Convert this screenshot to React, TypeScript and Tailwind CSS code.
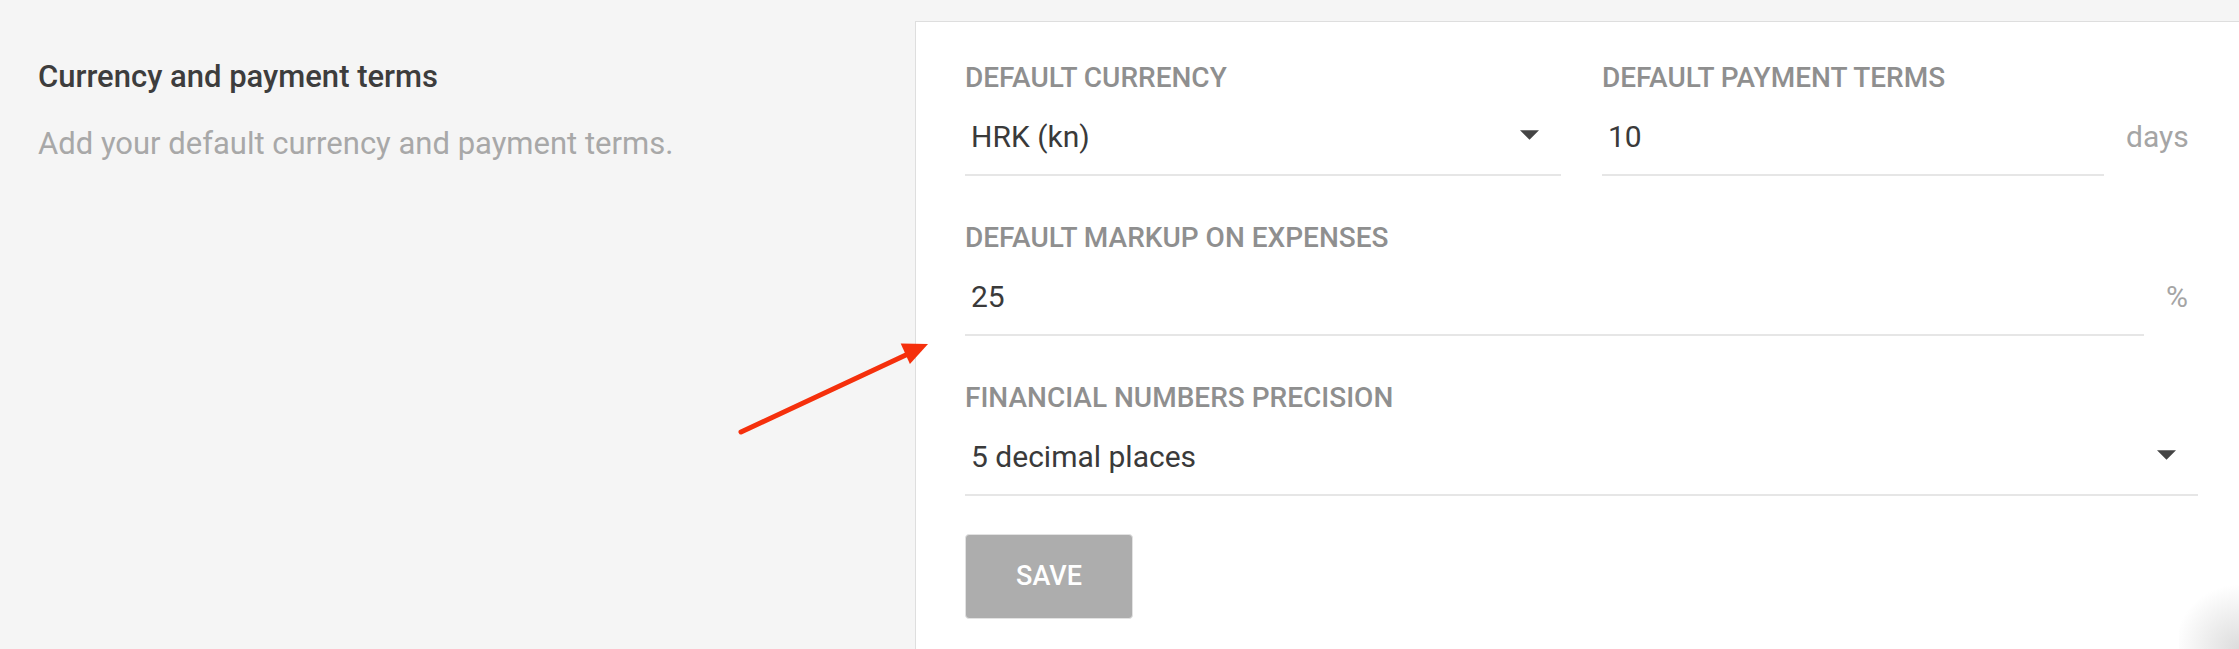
import React from "react";

function Caret({ w = 19 }: { w?: number }) {
  return (
    <svg width={w} height={10} viewBox="0 0 20 10" className="shrink-0 mt-[8px]">
      <polygon points="0,0 20,0 10,10" fill="#444444" />
    </svg>
  );
}

function Label({ children }: { children: React.ReactNode }) {
  return (
    <div className="text-[28px] leading-[28px] font-medium text-[#8f8f8f] whitespace-nowrap">
      {children}
    </div>
  );
}

function Input({
  value,
  caret,
  className = "",
}: {
  value: string;
  caret?: boolean;
  className?: string;
}) {
  return (
    <div
      className={
        "flex items-start border-b-2 border-[#e6e6e6] pb-[22px] pl-[6px] pr-[22px] " +
        className
      }
    >
      <span className="flex-1 text-[30px] leading-[30px] text-[#3a3a3a] whitespace-nowrap">
        {value}
      </span>
      {caret && <Caret />}
    </div>
  );
}

export default function App() {
  return (
    <div
      className="relative flex h-[649px] w-full overflow-hidden bg-[#f5f5f5]"
      style={{ fontFamily: "Roboto, 'Liberation Sans', sans-serif" }}
    >
      <div className="w-[915px] shrink-0 pl-[38px] pt-[61px]">
        <h2 className="text-[31px] leading-[31px] font-medium text-[#3d3d3d] whitespace-nowrap">
          Currency and payment terms
        </h2>
        <p className="mt-[36px] text-[31px] leading-[31px] text-[#a8a8a8] whitespace-nowrap">
          Add your default currency and payment terms.
        </p>
      </div>

      <div className="mt-[21px] flex-1 border-l border-t border-[#dedede] bg-white pl-[49px] pr-[41px] pt-[42px]">
        <div className="grid grid-cols-2 gap-x-[41px]">
          <div>
            <Label>DEFAULT CURRENCY</Label>
            <div className="mt-[30px]">
              <Input value="HRK (kn)" caret />
            </div>
          </div>
          <div>
            <Label>DEFAULT PAYMENT TERMS</Label>
            <div className="mt-[30px] flex items-start gap-[22px]">
              <Input value="10" className="flex-1" />
              <span className="w-[72px] text-[30px] leading-[30px] text-[#a5a5a5]">days</span>
            </div>
          </div>
        </div>

        <div className="mt-[48px]">
          <Label>DEFAULT MARKUP ON EXPENSES</Label>
          <div className="mt-[30px] flex items-start gap-[22px]">
            <Input value="25" className="flex-1" />
            <span className="w-[32px] text-[30px] leading-[30px] text-[#a5a5a5]">%</span>
          </div>
        </div>

        <div className="mt-[48px]">
          <Label>FINANCIAL NUMBERS PRECISION</Label>
          <div className="mt-[30px]">
            <Input value="5 decimal places" caret />
          </div>
        </div>

        <button className="mt-[38px] flex h-[85px] w-[168px] items-center justify-center rounded-[4px] border border-[#e2e2e2] bg-[#adadad] text-[27px] font-medium text-white">
          SAVE
        </button>
      </div>

      <svg
        className="pointer-events-none absolute left-[730px] top-[330px]"
        width={210}
        height={110}
        viewBox="0 0 210 110"
      >
        <line x1={11} y1={102} x2={178} y2={24} stroke="#f5300c" strokeWidth={5} strokeLinecap="round" />
        <polygon points="198,14 179.9,34 170.7,13.5" fill="#f5300c" />
      </svg>

      <div className="pointer-events-none absolute bottom-0 right-0 h-[70px] w-[60px] bg-[radial-gradient(circle_at_100%_100%,#dcdcdc_0%,rgba(255,255,255,0)_70%)]" />
    </div>
  );
}
